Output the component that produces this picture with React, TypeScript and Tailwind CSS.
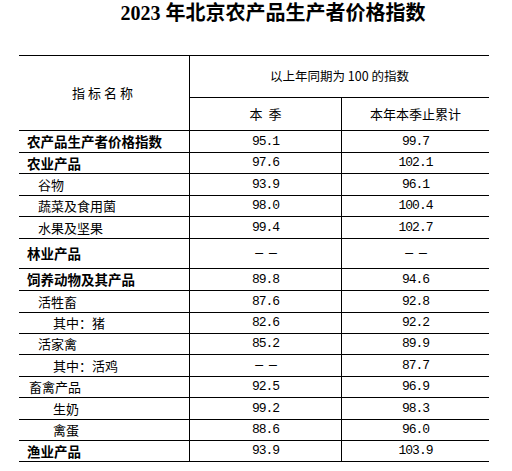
const cjk = { fontFamily: '"Noto Sans CJK SC", sans-serif' }
const mono = { fontFamily: '"Liberation Mono", "DejaVu Sans Mono", monospace' }

type Row = {
  name: string
  a: string
  b: string
  h: string
  bold?: boolean
  pad: string
}

const rows: Row[] = [
  { name: "农产品生产者价格指数", a: "95.1", b: "99.7", h: "h-[22px]", bold: true, pad: "pl-[8px]" },
  { name: "农业产品", a: "97.6", b: "102.1", h: "h-[21px]", bold: true, pad: "pl-[8px]" },
  { name: "谷物", a: "93.9", b: "96.1", h: "h-[22px]", pad: "pl-[19px]" },
  { name: "蔬菜及食用菌", a: "98.0", b: "100.4", h: "h-[21px]", pad: "pl-[19px]" },
  { name: "水果及坚果", a: "99.4", b: "102.7", h: "h-[22px]", pad: "pl-[19px]" },
  { name: "林业产品", a: "— —", b: "— —", h: "h-[30px]", bold: true, pad: "pl-[8px]" },
  { name: "饲养动物及其产品", a: "89.8", b: "94.6", h: "h-[22px]", bold: true, pad: "pl-[8px]" },
  { name: "活牲畜", a: "87.6", b: "92.8", h: "h-[22px]", pad: "pl-[19px]" },
  { name: "其中：猪", a: "82.6", b: "92.2", h: "h-[21px]", pad: "pl-[34px]" },
  { name: "活家禽", a: "85.2", b: "89.9", h: "h-[21px]", pad: "pl-[19px]" },
  { name: "其中：活鸡", a: "— —", b: "87.7", h: "h-[22px]", pad: "pl-[34px]" },
  { name: "畜禽产品", a: "92.5", b: "96.9", h: "h-[21px]", pad: "pl-[10px]" },
  { name: "生奶", a: "99.2", b: "98.3", h: "h-[22px]", pad: "pl-[34px]" },
  { name: "禽蛋", a: "88.6", b: "96.0", h: "h-[21px]", pad: "pl-[34px]" },
  { name: "渔业产品", a: "93.9", b: "103.9", h: "h-[21px]", bold: true, pad: "pl-[8px]" },
]

export default function App() {
  return (
    <div className="w-[512px] h-[471px] bg-white text-black overflow-hidden">
      <div
        className="h-[55px] pl-[34px] text-center text-[20px] leading-[27px] font-bold"
        style={{ fontFamily: '"Liberation Serif", "Noto Sans CJK SC", serif' }}
      >
        2023 年北京农产品生产者价格指数
      </div>

      <div className="ml-[19px] w-[470px]">
        {/* header */}
        <div className="flex border-t border-b border-black">
          <div
            className="w-[171px] border-r border-black flex items-center justify-center text-[13px] tracking-[3px]"
            style={cjk}
          >
            指标名称
          </div>
          <div className="flex-1 flex flex-col">
            <div className="h-[42px] border-b border-black flex items-center justify-center text-[12.5px]" style={cjk}>
              以上年同期为 100 的指数
            </div>
            <div className="h-[32px] flex text-[13px]" style={cjk}>
              <div className="w-[152px] border-r border-black flex items-center justify-center">本&nbsp;&nbsp;季</div>
              <div className="flex-1 flex items-center justify-center">本年本季止累计</div>
            </div>
          </div>
        </div>

        {rows.map((r) => (
          <div key={r.name} className={`flex border-b border-black ${r.h}`}>
            <div
              className={`w-[171px] border-r border-black flex items-center ${r.pad} ${
                r.bold ? "font-bold text-[13.5px]" : "text-[13px]"
              }`}
              style={cjk}
            >
              {r.name}
            </div>
            <div
              className="w-[152px] border-r border-black flex items-center justify-center text-[13px] tracking-[-1px]"
              style={mono}
            >
              {r.a}
            </div>
            <div className="flex-1 flex items-center justify-center text-[13px] tracking-[-1px]" style={mono}>
              {r.b}
            </div>
          </div>
        ))}
      </div>
    </div>
  )
}
